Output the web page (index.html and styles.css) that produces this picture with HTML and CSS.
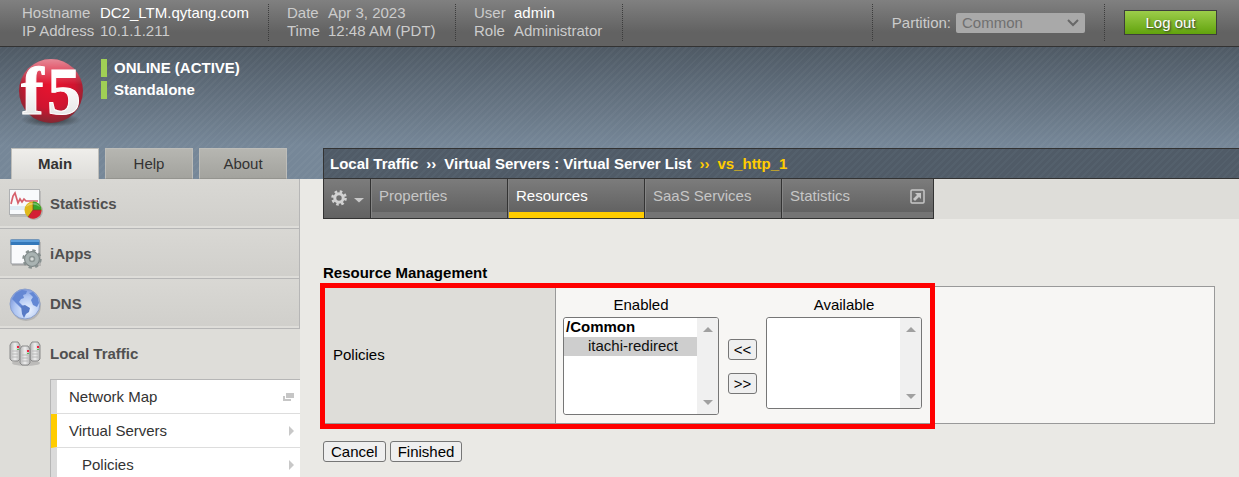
FILE: index.html
```html
<!DOCTYPE html>
<html lang="en">
<head>
<meta charset="utf-8">
<title>Virtual Servers : Resources</title>
<link rel="stylesheet" href="styles.css">
</head>
<body>
<header class="topbar">
  <dl class="info info-host"><dt>Hostname</dt><dd class="strong">DC2_LTM.qytang.com</dd><dt>IP Address</dt><dd>10.1.1.211</dd></dl>
  <dl class="info info-date"><dt>Date</dt><dd>Apr 3, 2023</dd><dt>Time</dt><dd>12:48 AM (PDT)</dd></dl>
  <dl class="info info-user"><dt>User</dt><dd class="strong">admin</dd><dt>Role</dt><dd>Administrator</dd></dl>
  <div class="partition">
    <label for="partition">Partition:</label>
    <span class="select-wrap">
      <select id="partition" disabled><option>Common</option></select>
      <svg class="chevron" width="12" height="8" viewBox="0 0 12 8"><path d="M1 1l5 5 5-5" fill="none" stroke="#686868" stroke-width="2"/></svg>
    </span>
  </div>
  <div class="session"><button class="logout" type="button">Log out</button></div>
</header>

<div class="banner">
  <div class="banner-left">
    <div class="brand">
      <svg class="logo" width="68" height="82" viewBox="0 -8 68 82" role="img" aria-label="f5">
        <defs>
          <radialGradient id="ball" cx="50%" cy="40%" r="62%">
            <stop offset="0" stop-color="#e8142f"/><stop offset=".6" stop-color="#d01430"/><stop offset="1" stop-color="#7c2a33"/>
          </radialGradient>
          <linearGradient id="shine" x1="0" y1="0" x2="0" y2="1">
            <stop offset="0" stop-color="#fff" stop-opacity=".5"/><stop offset=".4" stop-color="#fff" stop-opacity="0"/>
          </linearGradient>
          <linearGradient id="letter" x1="0" y1="0" x2="0" y2="1">
            <stop offset=".4" stop-color="#fff"/><stop offset="1" stop-color="#dcdcdc"/>
          </linearGradient>
          <radialGradient id="shade"><stop offset="0" stop-color="#222" stop-opacity=".8"/><stop offset="1" stop-color="#222" stop-opacity="0"/></radialGradient>
        </defs>
        <ellipse cx="34" cy="61" rx="30" ry="7" fill="url(#shade)"/>
        <circle cx="34" cy="32" r="32" fill="url(#ball)"/>
        <circle cx="34" cy="32" r="32" fill="url(#shine)"/>
        <g class="logo-text" fill="url(#letter)" stroke="#fff"><text x="4" y="55">f</text><text x="30" y="55">5</text></g>
      </svg>
      <ul class="status"><li>ONLINE (ACTIVE)</li><li>Standalone</li></ul>
    </div>
    <nav class="main-tabs"><a class="active" href="#">Main</a><a href="#">Help</a><a href="#">About</a></nav>
  </div>
  <nav class="breadcrumb"><a href="#">Local Traffic</a><span>››</span><a href="#">Virtual Servers : Virtual Server List</a><span class="here">››</span><span class="here">vs_http_1</span></nav>
</div>

<div class="body">
  <aside class="sidebar">
    <a class="module" href="#">
      <svg width="36" height="36" viewBox="0 0 36 36">
        <rect x="3" y="5" width="31" height="26" fill="#aaa" opacity=".6"/>
        <rect x="2.500" y="3.500" width="30" height="25" fill="#f8fafc" stroke="#aeb0b2"/>
        <path d="M3 21h29M3 23h29" stroke="#c6dcec" fill="none"/>
        <path d="M4 18l2-8 2-3 3 10 2-4 2 3 2-3 2 2h12" fill="none" stroke="#d6606c" stroke-width="1.700"/>
        <circle cx="27" cy="25" r="9" fill="#999" opacity=".6"/>
        <circle cx="26" cy="24" r="8.500" fill="#e0b91c"/>
        <path d="M26 24V15.500A8.500 8.500 0 0 1 34.500 24z" fill="#36a42b"/>
        <path d="M26 24h8.500A8.500 8.500 0 0 1 21 31z" fill="#d41f35"/>
        <path d="M26 24V16M26 24h8M26 24l-5 7" stroke="#7c4a18" stroke-width=".7"/>
        <path d="M19 21a8 8 0 0 1 14 0q-7-5-14 0" fill="#fff" opacity=".3"/>
      </svg>Statistics</a>
    <a class="module" href="#">
      <svg width="36" height="36" viewBox="0 0 36 36">
        <rect x="5" y="6" width="29" height="24" fill="#999" opacity=".5"/>
        <rect x="4" y="4" width="28" height="24" rx="1" fill="#f9fafc" stroke="#93979c"/>
        <path d="M3.500 3.500h29V9h-29z" fill="#3478ba"/><path d="M4 4h28v2H4z" fill="#5e9fdb"/>
        <circle cx="25" cy="23" r="7.500" fill="#9ba5a5" stroke="#798383"/>
        <circle cx="25" cy="23" r="8.500" fill="none" stroke="#87908f" stroke-width="2.400" stroke-dasharray="3.340 3.340"/>
        <circle cx="25" cy="23" r="6.500" fill="#a9b3b2"/>
        <circle cx="25" cy="23" r="2.500" fill="#d7dbd9" stroke="#8b9493" stroke-width="1.500"/>
      </svg>iApps</a>
    <a class="module" href="#">
      <svg width="36" height="36" viewBox="0 0 36 36">
        <defs><radialGradient id="sea" cx="60%" cy="70%" r="75%"><stop offset="0" stop-color="#eef5ff"/><stop offset=".6" stop-color="#aec5f2"/><stop offset="1" stop-color="#738fd8"/></radialGradient></defs>
        <circle cx="19" cy="20" r="15" fill="#999" opacity=".5"/>
        <circle cx="18" cy="18" r="15" fill="url(#sea)" stroke="#8ba0cc"/>
        <path d="M5 13l4-6 6-3 5 1-1 3-3 1 1 3-3 1-2 3 3 3 2 2-3 1-4-4-3-3z" fill="#6487d3"/>
        <path d="M14 20l4-1 5 3-1 4-3 2-2 4-2-4z" fill="#587bc6"/>
        <path d="M22 7l4-1 5 6 1 5-2 4-4-2-2-5 2-3z" fill="#6388d5"/>
      </svg>DNS</a>
    <section>
      <a class="module open" href="#">
        <svg width="36" height="36" viewBox="0 0 36 36">
          <defs>
            <linearGradient id="metal"><stop offset="0" stop-color="#b4b4b4"/><stop offset=".5" stop-color="#eee"/><stop offset="1" stop-color="#b4b4b4"/></linearGradient>
            <g id="server"><path d="M0 3l2-3h6l2 3v14l-2 2H2l-2-2z" fill="url(#metal)" stroke="#8a8a8a"/><path d="M2 9h6M2 12h6M2 15h6" stroke="#b8b8b8"/><path d="M7 4h2v2H7z" fill="#ed2340"/><path d="M7 7h2v1H7z" fill="#54bd58"/></g>
          </defs>
          <ellipse cx="19" cy="27" rx="14" ry="3" fill="#999" opacity=".5"/>
          <use href="#server" x="3" y="6"/><use href="#server" x="23" y="6"/><use href="#server" x="13" y="10"/>
        </svg>Local Traffic</a>
      <ul class="submenu">
        <li><a href="#">Network Map<svg width="11" height="8" viewBox="0 0 11 8"><path d="M3 0h8v5H3zM0 3h2v3h6v2H0z" fill="#c6c6c6"/></svg></a></li>
        <li class="current"><a href="#">Virtual Servers<svg width="6" height="10" viewBox="0 0 6 10"><path d="M1 0l5 5-5 5z" fill="#c8c8c8"/></svg></a></li>
        <li class="nested"><a href="#">Policies<svg width="6" height="10" viewBox="0 0 6 10"><path d="M1 0l5 5-5 5z" fill="#c8c8c8"/></svg></a></li>
      </ul>
    </section>
  </aside>

  <main class="content">
    <div class="tabstrip">
      <nav class="page-tabs">
        <button class="gear" type="button" aria-label="Options">
          <svg width="34" height="18" viewBox="0 0 34 18">
            <circle cx="9" cy="9" r="4.200" fill="none" stroke="#d2d2d2" stroke-width="3"/>
            <circle cx="9" cy="9" r="6.500" fill="none" stroke="#d2d2d2" stroke-width="2.600" stroke-dasharray="2.550 2.550"/>
            <path d="M24 9h10l-5 4.500z" fill="#c8c8c8"/>
          </svg>
        </button>
        <a href="#">Properties</a><a class="active" href="#">Resources</a><a href="#">SaaS Services</a>
        <a class="wide" href="#">Statistics<svg width="15" height="17" viewBox="0 -2 15 17"><rect x="1" y="1" width="13" height="13" rx="1" fill="none" stroke="#c6c6c6" stroke-width="1.500"/><path d="M5 4h6v6L9 8l-4 4-2-2 4-4z" fill="#c6c6c6"/></svg></a>
      </nav>
    </div>

    <form class="resources">
      <h1>Resource Management</h1>
      <div class="panel">
        <table class="settings">
          <tr>
            <th scope="row">Policies</th>
            <td>
              <div class="picker">
                <div class="list">
                  <label for="enabled">Enabled</label>
                  <div class="listbox">
                    <select id="enabled" class="tall" multiple size="5"><optgroup label="/Common"><option selected>itachi-redirect</option></optgroup></select>
                    <div class="track"><i class="up"></i><i class="down"></i></div>
                  </div>
                </div>
                <div class="movers"><button type="button">&lt;&lt;</button><button type="button">&gt;&gt;</button></div>
                <div class="list">
                  <label for="available">Available</label>
                  <div class="listbox">
                    <select id="available" multiple size="5"></select>
                    <div class="track"><i class="up"></i><i class="down"></i></div>
                  </div>
                </div>
              </div>
            </td>
          </tr>
        </table>
        <div class="highlight"></div>
      </div>
      <div class="actions"><button type="button">Cancel</button><button type="button">Finished</button></div>
    </form>
  </main>
</div>
</body>
</html>
```
FILE: styles.css
```css
* { box-sizing: border-box; }

body {
  margin: 0;
  height: 100vh;
  display: flex;
  flex-direction: column;
  overflow: hidden;
  background: #eae9e5;
  color: #000;
  font: 15px/18px "Liberation Sans", Arial, sans-serif;
}

a { color: inherit; text-decoration: none; }
ul, dl, dd { margin: 0; padding: 0; list-style: none; }
button, select { font: inherit; color: #000; }
svg { flex: none; }

/* Top bar */
.topbar {
  flex: none;
  display: flex;
  height: 47px;
  padding: 4px 22px 5px;
  border-bottom: 1px solid #333;
  background: linear-gradient(#808080, #626262 70%);
  color: #ccc;
}
.info {
  display: grid;
  align-content: start;
  margin-right: 18px;
  border-right: 1px dotted #3c3c3c;
  white-space: nowrap;
}
.info-host { grid-template-columns: 78px 168px; }
.info-date { grid-template-columns: 41px 127px; }
.info-user { grid-template-columns: 40px 108px; }
.strong { color: #fff; }
.partition {
  display: flex;
  align-items: center;
  gap: 5px;
  margin-left: auto;
  padding: 0 19px;
  border-left: 1px dotted #3c3c3c;
  border-right: 1px dotted #3c3c3c;
}
.select-wrap { position: relative; }
.select-wrap select {
  display: block;
  appearance: none;
  width: 129px;
  height: 20px;
  padding: 0 6px;
  border: 0;
  border-radius: 2px;
  background: #a9a9a9;
  color: #707070;
  opacity: 1;
}
.chevron { position: absolute; right: 6px; top: 6px; }
.session { display: flex; align-items: center; padding-left: 19px; }
.logout {
  width: 93px;
  height: 25px;
  padding: 0;
  border: 1px solid #3d3d3d;
  background: linear-gradient(#9ccd4a, #62a30d);
  color: #fff;
  text-shadow: 1px 1px 2px #333;
}

/* Banner */
.banner {
  flex: none;
  display: grid;
  grid-template-columns: 300px 1fr;
  align-items: end;
  height: 132px;
  background:
    repeating-linear-gradient(135deg, rgba(255,255,255,.03) 0 2px, transparent 2px 5px),
    linear-gradient(#4f5a65, #768798 75%);
}
.banner-left {
  display: flex;
  flex-direction: column;
  justify-content: space-between;
  height: 100%;
}
.brand { display: flex; gap: 16px; padding: 4px 0 0 17px; }
.logo-text {
  font: bold 68px "Liberation Serif", serif;
  stroke-width: 1px;
}
.status {
  display: grid;
  align-content: start;
  gap: 4px;
  padding-top: 8px;
  color: #fff;
  font-weight: bold;
}
.status li { padding-left: 7px; border-left: 6px solid #a0cf55; }
.main-tabs { display: flex; gap: 6px; padding-left: 11px; }
.main-tabs a {
  width: 88px;
  height: 31px;
  border: 1px solid #bdbdb9;
  border-bottom-color: #94948f;
  background: linear-gradient(#b6b6b1, #a3a39e);
  color: #333;
  line-height: 30px;
  text-align: center;
}
.main-tabs .active {
  border-bottom: 0;
  background: linear-gradient(#efeeeb, #deddd9);
  font-weight: bold;
}
.breadcrumb {
  display: flex;
  gap: 8px;
  height: 31px;
  margin-left: 23px;
  padding-left: 6px;
  border: 1px solid #333;
  border-right: 0;
  background: repeating-linear-gradient(135deg, #54606c 0 2px, #505b67 2px 5px);
  color: #fff;
  font-weight: bold;
  line-height: 29px;
  white-space: nowrap;
}
.here { color: #fc0; }

/* Sidebar */
.body { flex: 1; display: flex; min-height: 0; }
.sidebar { flex: none; width: 300px; background: #deddd9; }
.module {
  display: flex;
  align-items: center;
  gap: 7px;
  height: 50px;
  padding-left: 7px;
  border: 1px solid #b6b6b6;
  border-width: 0 1px 1px 0;
  background: linear-gradient(#d9d8d4, #d0cfcb);
  box-shadow: inset 0 -2px #deddd9;
  color: #505050;
  font-weight: bold;
}
.module.open { border: 0; background: #deddd9; box-shadow: none; }
.submenu {
  margin-left: 50px;
  border-top: 1px solid #b6b6b6;
  border-left: 1px solid #b6b6b6;
}
.submenu li {
  height: 34px;
  border-left: 6px solid #dadada;
  border-bottom: 1px solid #ddd;
  background: #fff;
  color: #333;
}
.submenu .current { border-left-color: #fc0; }
.submenu a {
  display: flex;
  align-items: center;
  justify-content: space-between;
  height: 100%;
  padding: 0 6px 0 12px;
}
.submenu .nested a { padding-left: 25px; }

/* Page tabs */
.content { flex: 1; min-width: 0; }
.tabstrip { margin-left: 23px; background: #deddd9; }
.page-tabs {
  display: flex;
  width: max-content;
  height: 40px;
  border: 1px solid #333;
  border-top: 0;
}
.page-tabs > * {
  width: 137px;
  padding: 8px;
  border: solid #333;
  border-width: 0 0 0 1px;
  background: linear-gradient(#7c7c7c, #626262 33px, #747474 33px);
  box-shadow: inset 1px 0 #858585;
  color: #c6c6c6;
}
.page-tabs .gear {
  width: 46px;
  padding: 3px 5px 0;
  border: 0;
  background: linear-gradient(#7c7c7c, #626262);
  box-shadow: none;
}
.page-tabs .active {
  background: linear-gradient(#7c7c7c, #626262 33px, #fc0 33px);
  color: #fff;
}
.page-tabs .wide {
  display: flex;
  justify-content: space-between;
  width: 152px;
}

/* Resource form */
.resources { padding: 45px 24px 0 23px; }
.resources h1 { margin: 0 0 4px; font-size: 15px; line-height: 18px; }
.panel { position: relative; }
.settings {
  width: 100%;
  height: 138px;
  border: 1px solid #999;
  border-spacing: 0;
  box-shadow: inset 0 -1px #ccc;
}
.settings th {
  width: 232px;
  padding: 0 9px;
  border-right: 1px solid #999;
  background: #deddd9;
  font-weight: normal;
  text-align: left;
}
.settings td { padding: 8px 7px; background: #f7f6f4; }
.picker { display: flex; gap: 9px; }
.list { display: flex; flex-direction: column; gap: 3px; text-align: center; }
.listbox {
  display: flex;
  width: 156px;
  border: 1px solid #767676;
  border-radius: 3px;
  background: #fff;
  overflow: hidden;
}
.listbox select {
  flex: 1;
  min-width: 0;
  height: 90px;
  padding: 0;
  border: 0;
  background: #fff;
  overflow: hidden;
  scrollbar-width: none;
}
.listbox .tall { height: 96px; }
.listbox optgroup, .listbox option { line-height: 19px; }
.listbox option { min-height: 19px; padding-left: 24px; }
.track {
  display: flex;
  flex-direction: column;
  justify-content: space-between;
  width: 21px;
  padding: 9px 6px;
  background: #f0f0f0;
}
.up, .down { border: solid transparent; border-width: 0 5px; }
.up { border-bottom: 5px solid #a0a0a0; }
.down { border-top: 5px solid #a0a0a0; }
.movers { display: grid; align-content: start; gap: 13px; padding-top: 43px; }
.movers button, .actions button {
  height: 21px;
  padding: 0 7px;
  border: 1px solid #767676;
  border-radius: 3px;
  background: #efefef;
  line-height: 19px;
}
.movers button { width: 29px; padding: 0; }
.highlight {
  position: absolute;
  top: -3px;
  left: -3px;
  width: 615px;
  bottom: -5px;
  border: 5px solid #f00;
  pointer-events: none;
}
.actions { display: flex; gap: 4px; margin-top: 17px; }
```
